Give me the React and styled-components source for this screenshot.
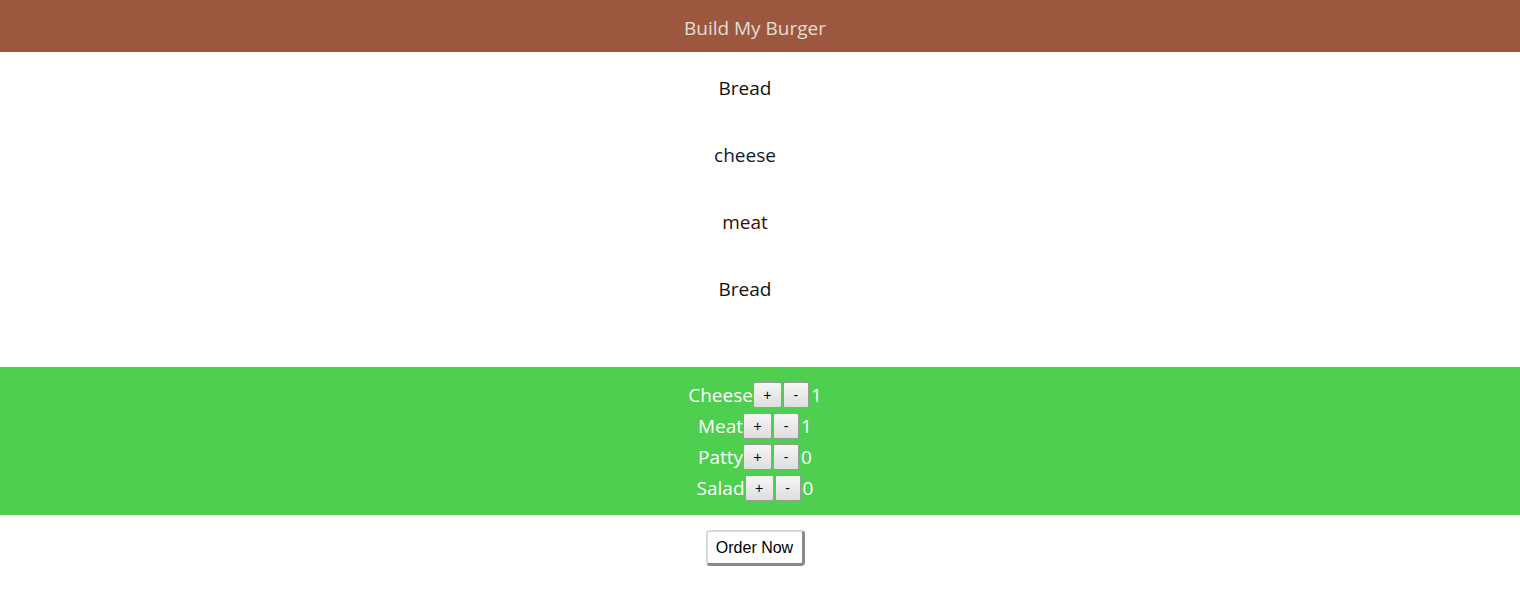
import React, { useState } from "react";
import styled, { createGlobalStyle } from "styled-components";

const GlobalStyle = createGlobalStyle`
  body {
    margin: 0;
    background: #ffffff;
    font-family: "Open Sans", "Noto Sans", sans-serif;
  }
`;

const Header = styled.header`
  height: 52px;
  background-color: #9b583e;
  color: #e6dcd8;
  display: flex;
  align-items: center;
  justify-content: center;
  padding-right: 10px;
  font-size: 19px;
  padding-top: 4px;
  box-sizing: border-box;
`;

const Burger = styled.div`
  height: 315px;
  box-sizing: border-box;
  display: flex;
  flex-direction: column;
  align-items: center;
  gap: 40px;
  padding: 23px 30px 0 0;
`;

const Layer = styled.div`
  font-size: 19px;
  line-height: 27px;
  color: ${(p) => p.$color || "#111"};
`;

const Controls = styled.div`
  background-color: #4fcf50;
  padding: 12px 10px 12px 0;
  display: flex;
  flex-direction: column;
  align-items: center;
`;

const Row = styled.div`
  height: 31px;
  display: flex;
  align-items: center;
  color: #ffffff;
  font-size: 19px;
`;

const SmallButton = styled.button`
  height: 26px;
  width: ${(p) => (p.$wide ? "29px" : "26px")};
  padding: 0;
  margin-right: 1px;
  font-family: "Liberation Sans", Arial, sans-serif;
  font-size: 14px;
  color: #000;
  background: linear-gradient(#f6f6f6, #dedede);
  border: 1px solid #9a9a9a;
  border-radius: 2px;
`;

const Count = styled.span`
  margin-left: 1px;
`;

const Footer = styled.div`
  display: flex;
  justify-content: center;
  padding: 15px 10px 0 0;
`;

const OrderButton = styled.button`
  height: 36px;
  width: 99px;
  font-family: "Liberation Sans", Arial, sans-serif;
  font-size: 16px;
  color: #000;
  background: #fff;
  border: 2px solid;
  border-color: #d8d8d8 #8a8a8a #8a8a8a #d8d8d8;
  border-width: 2px 3px 3px 2px;
  border-radius: 4px;
  padding: 0;
`;

const initial = [
  { name: "Cheese", count: 1 },
  { name: "Meat", count: 1 },
  { name: "Patty", count: 0 },
  { name: "Salad", count: 0 },
];

export default function App() {
  const [items, setItems] = useState(initial);

  const change = (i, d) =>
    setItems((prev) =>
      prev.map((it, idx) =>
        idx === i ? { ...it, count: Math.max(0, it.count + d) } : it
      )
    );

  return (
    <>
      <GlobalStyle />
      <Header>Build My Burger</Header>
      <Burger>
        <Layer>Bread</Layer>
        <Layer $color="#0d1a2e">cheese</Layer>
        <Layer $color="#3a0d05">meat</Layer>
        <Layer>Bread</Layer>
      </Burger>
      <Controls>
        {items.map((it, i) => (
          <Row key={it.name}>
            {it.name}
            <SmallButton $wide onClick={() => change(i, 1)}>+</SmallButton>
            <SmallButton onClick={() => change(i, -1)}>-</SmallButton>
            <Count>{it.count}</Count>
          </Row>
        ))}
      </Controls>
      <Footer>
        <OrderButton>Order Now</OrderButton>
      </Footer>
    </>
  );
}
